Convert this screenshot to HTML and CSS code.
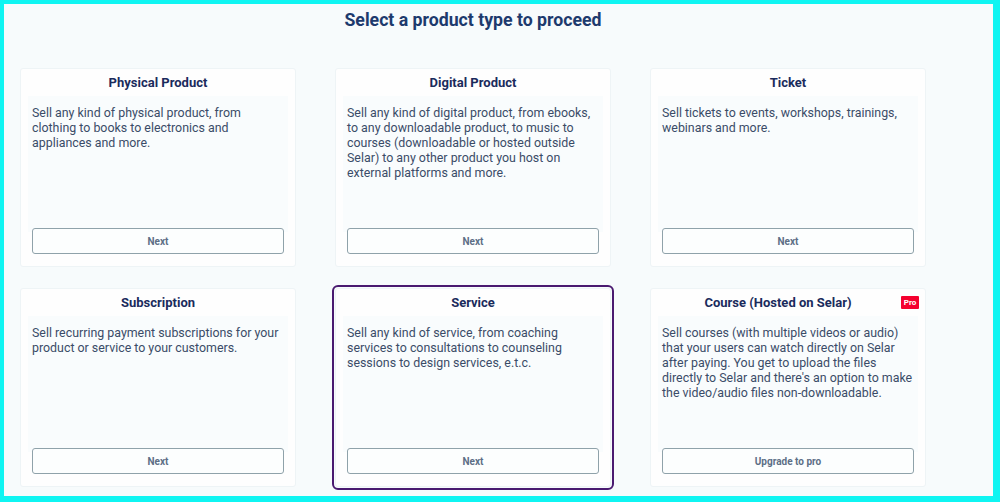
FILE: index.html
```html
<!DOCTYPE html>
<html>
<head>
<meta charset="utf-8">
<link rel="stylesheet" href="styles.css">
</head>
<body>
<div class="frame">
  <h1 class="heading">Select a product type to proceed</h1>
  <div class="grid">
    <div class="card">
      <div class="title">Physical Product</div>
      <div class="desc">Sell any kind of physical product, from clothing to books to electronics and appliances and more.</div>
      <button class="btn">Next</button>
    </div>
    <div class="card">
      <div class="title">Digital Product</div>
      <div class="desc">Sell any kind of digital product, from ebooks, to any downloadable product, to music to courses (downloadable or hosted outside Selar) to any other product you host on external platforms and more.</div>
      <button class="btn">Next</button>
    </div>
    <div class="card">
      <div class="title">Ticket</div>
      <div class="desc">Sell tickets to events, workshops, trainings, webinars and more.</div>
      <button class="btn">Next</button>
    </div>
    <div class="card">
      <div class="title">Subscription</div>
      <div class="desc">Sell recurring payment subscriptions for your product or service to your customers.</div>
      <button class="btn">Next</button>
    </div>
    <div class="card selected">
      <div class="title">Service</div>
      <div class="desc">Sell any kind of service, from coaching services to consultations to counseling sessions to design services, e.t.c.</div>
      <button class="btn">Next</button>
    </div>
    <div class="card">
      <span class="pro">Pro</span>
      <div class="title with-badge">Course (Hosted on Selar)</div>
      <div class="desc">Sell courses (with multiple videos or audio) that your users can watch directly on Selar after paying. You get to upload the files directly to Selar and there's an option to make the video/audio files non-downloadable.</div>
      <button class="btn">Upgrade to pro</button>
    </div>
  </div>
</div>
</body>
</html>
```

FILE: styles.css
```css
* { box-sizing: border-box; }
html, body { margin: 0; padding: 0; }
body {
  font-family: Roboto, "Liberation Sans", sans-serif;
  background: #00f5f5;
}
.frame {
  width: 1000px;
  height: 502px;
  border-style: solid;
  border-color: #0ff5f2;
  border-width: 4px 7px 6px 4px;
  background: #f7fbfc;
  padding: 0 0 0 16px;
  overflow: hidden;
}
.heading {
  margin: 0;
  width: 906px;
  text-align: center;
  font-size: 17.7px;
  font-weight: 700;
  color: #1d3a6d;
  line-height: 20px;
  padding-top: 6px;
  height: 64px;
}
.grid {
  display: grid;
  grid-template-columns: repeat(3, 276px);
  grid-template-rows: 199px 199px;
  column-gap: 39px;
  row-gap: 21px;
}
.card {
  position: relative;
  background: #fefefe;
  border: 1px solid #eef4f6;
  border-radius: 3px;
  padding: 5px 11px 12px;
  display: flex;
  flex-direction: column;
}
.card.selected {
  outline: 2px solid #4a1a70;
  outline-offset: 1px;
  border-radius: 3px;
}
.title {
  text-align: center;
  font-size: 13px;
  font-weight: 700;
  color: #1a2b5c;
  line-height: 18px;
}
.title.with-badge {
  padding-right: 20px;
}
.desc {
  flex: 1;
  margin: 4px -4px 0;
  padding: 9px 3px 0 4px;
  background: #f9fcfd;
  font-size: 12.4px;
  line-height: 15px;
  color: #3b4c68;
}
.btn {
  height: 26px;
  width: 100%;
  margin-top: -4px;
  background: #fcfefe;
  border: 1.5px solid #8fa2aa;
  border-radius: 3px;
  font-family: Roboto, "Liberation Sans", sans-serif;
  font-size: 10px;
  font-weight: 700;
  color: #5d6f86;
  padding: 0;
}
.pro {
  position: absolute;
  top: 7px;
  right: 6px;
  width: 18px;
  height: 13px;
  background: #f5002f;
  color: #fff;
  font-size: 8px;
  font-weight: 700;
  line-height: 13px;
  text-align: center;
  border-radius: 1px;
}
```
